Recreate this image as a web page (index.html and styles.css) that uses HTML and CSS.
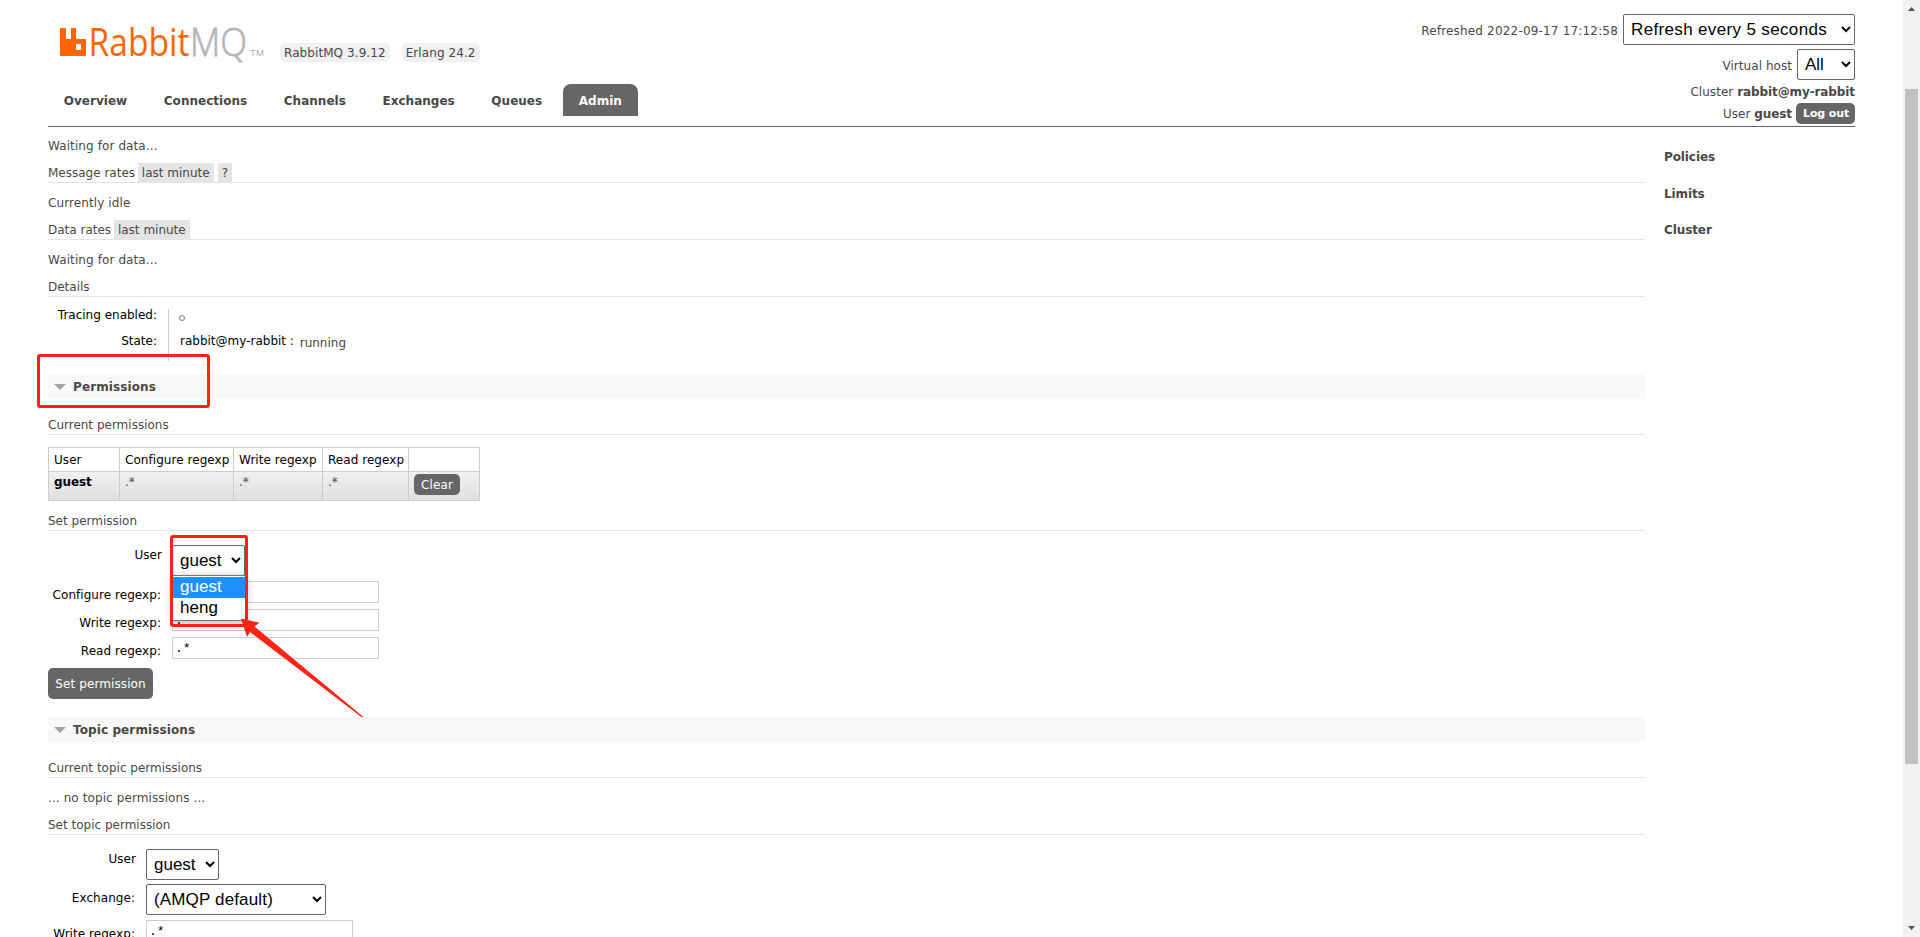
FILE: index.html
```html
<!DOCTYPE html>
<html lang="en">

<head>
    <meta charset="UTF-8">
    <title>RabbitMQ Management</title>
    <link rel="stylesheet" href="styles.css">
</head>

<body>
    <div class="page">
        <header class="header">
            <div class="header-left">
                <div class="brand">
                    <svg class="logo" width="210" height="60" viewBox="0 -16 210 60">
                        <path fill="#f60" fill-rule="evenodd" d="M1 0h4q1 0 1 1v9q0 1 1 1h3q1 0 1-1V1q0-1 1-1h3q1 0 1 1v9q0 1 1 1h8q1 0 1 1v15q0 1-1 1H1q-1 0-1-1V1q0-1 1-1zM16 17v4q0 1 1 1h3q1 0 1-1v-4q0-1-1-1h-3q-1 0-1 1z" />
                        <text class="logo-rabbit" x="28.5" y="28" textLength="101" lengthAdjust="spacingAndGlyphs">Rabbit</text>
                        <text class="logo-mq" x="130" y="28" textLength="57" lengthAdjust="spacingAndGlyphs">MQ</text>
                        <text class="logo-tm" x="190" y="28" textLength="14" lengthAdjust="spacingAndGlyphs">TM</text>
                    </svg>
                    <span class="version">RabbitMQ 3.9.12</span>
                    <span class="version">Erlang 24.2</span>
                </div>
                <nav class="menu">
                    <a>Overview</a>
                    <a>Connections</a>
                    <a>Channels</a>
                    <a>Exchanges</a>
                    <a>Queues</a>
                    <a class="selected">Admin</a>
                </nav>
            </div>
            <div class="login">
                <div class="login-row tall">
                    <span class="refreshed">Refreshed 2022-09-17 17:12:58</span>
                    <select class="refresh"><option>Refresh every 5 seconds</option></select>
                </div>
                <div class="login-row tall">
                    <span>Virtual host</span>
                    <select class="vhost"><option>All</option></select>
                </div>
                <div class="login-row cluster"><span>Cluster <b>rabbit@my-rabbit</b></span></div>
                <div class="login-row user"><span>User <b>guest</b></span><button class="btn-small logout">Log out</button></div>
            </div>
        </header>

        <div class="columns">
            <main class="main">
                <p class="msg">Waiting for data...</p>
                <h2>Message rates <span class="chip">last minute</span><span class="chip help">?</span></h2>
                <p class="msg">Currently idle</p>
                <h2>Data rates <span class="chip">last minute</span></h2>
                <p class="msg">Waiting for data...</p>
                <h2>Details</h2>
                <div class="facts">
                    <div class="facts-labels">
                        <span>Tracing enabled:</span>
                        <span>State:</span>
                    </div>
                    <div class="facts-values">
                        <span><i class="off"></i></span>
                        <span>rabbit@my-rabbit : <em>running</em></span>
                    </div>
                </div>

                <h3 class="section-title marked">Permissions</h3>
                <h2>Current permissions</h2>
                <table class="list">
                    <tr>
                        <th class="c-user">User</th>
                        <th class="c-conf">Configure regexp</th>
                        <th class="c-write">Write regexp</th>
                        <th class="c-read">Read regexp</th>
                        <th class="c-act"></th>
                    </tr>
                    <tr class="row">
                        <td><b>guest</b></td>
                        <td>.*</td>
                        <td>.*</td>
                        <td>.*</td>
                        <td><button class="btn-small">Clear</button></td>
                    </tr>
                </table>

                <h2 class="after-list">Set permission</h2>
                <div class="form">
                    <div class="field">
                        <label class="top">User</label>
                        <div class="user-select">
                            <select class="guest"><option>guest</option></select>
                            <div class="options">
                                <div class="option active">guest</div>
                                <div class="option">heng</div>
                            </div>
                            <div class="highlight"></div>
                            <svg class="arrow" width="124" height="102" viewBox="0 0 124 102">
                                <path fill="#ff2314" d="M1 1.500l18.500 4.200-5 3.800L123.500 100l-.8 1L10 15l-3 5z" />
                            </svg>
                        </div>
                    </div>
                    <div class="field"><label>Configure regexp:</label><input type="text" value=".*"></div>
                    <div class="field"><label>Write regexp:</label><input type="text" value=".*"></div>
                    <div class="field"><label>Read regexp:</label><input type="text" value=".*"></div>
                    <button class="btn">Set permission</button>
                </div>

                <h3 class="section-title">Topic permissions</h3>
                <h2>Current topic permissions</h2>
                <p class="msg">... no topic permissions ...</p>
                <h2>Set topic permission</h2>
                <div class="form topic">
                    <div class="field"><label class="top">User</label><select class="guest"><option>guest</option></select></div>
                    <div class="field"><label>Exchange:</label><select class="exchange"><option>(AMQP default)</option></select></div>
                    <div class="field"><label>Write regexp:</label><input type="text" value=".*"></div>
                </div>
            </main>
            <aside class="side">
                <a>Policies</a>
                <a>Limits</a>
                <a>Cluster</a>
            </aside>
        </div>
    </div>

    <div class="scrollbar">
        <svg width="17" height="17" viewBox="0 0 17 17"><path fill="#505050" d="M5 11h7L8.500 7z" /></svg>
        <div class="thumb"></div>
        <svg class="down" width="17" height="17" viewBox="0 0 17 17"><path fill="#505050" d="M5 6h7L8.500 10z" /></svg>
    </div>
</body>

</html>
```
FILE: styles.css
```css
*,
*::before,
*::after {
    box-sizing: border-box;
}

body {
    margin: 0;
    height: 937px;
    overflow: hidden;
    display: flex;
    background: #fff;
    color: #484848;
    font: 12px/16px Verdana, "DejaVu Sans", sans-serif;
    letter-spacing: 0.05px;
}

.page {
    width: 1903px;
    height: 937px;
    overflow: hidden;
    padding: 0 48px;
}

b,
.side a {
    font-weight: bold;
    letter-spacing: -0.1px;
}

/* header */
.header {
    display: flex;
    justify-content: space-between;
    height: 127px;
    border-bottom: 1px solid #666;
}

.brand {
    display: flex;
    height: 84px;
    padding: 12px 0 0 12px;
}

.logo {
    margin-right: 10px;
}

.logo-rabbit,
.logo-mq {
    font-family: "Open Sans", sans-serif;
    font-size: 39px;
    letter-spacing: 0;
    fill: #f60;
}

.logo-mq {
    font-weight: 300;
    fill: #b5b5b5;
    stroke: #b5b5b5;
    stroke-width: 0.8px;
}

.logo-tm {
    font-family: "Liberation Sans", sans-serif;
    font-size: 9px;
    fill: #b0b0b0;
}

.version {
    height: 19px;
    margin: 31px 12px 0 0;
    padding: 0 4px;
    line-height: 20px;
    letter-spacing: 0.08px;
    border-radius: 5px;
    background: #f0f0f0;
    white-space: nowrap;
}

.menu {
    display: flex;
    gap: 5px;
}

.menu a {
    height: 32px;
    padding: 0 15.8px;
    font-weight: bold;
    line-height: 34px;
    letter-spacing: 0.02px;
}

.menu .selected {
    background: #666;
    color: #fff;
    border-radius: 8px 8px 0 0;
}

.login {
    padding-top: 14px;
}

.login-row {
    display: flex;
    justify-content: flex-end;
    align-items: center;
    gap: 4px;
}

.login-row.tall {
    height: 31px;
    gap: 5px;
    margin-bottom: 4px;
}

.login-row.tall span {
    padding-top: 2px;
}

.login-row .refreshed {
    letter-spacing: 0.18px;
}

.login-row.cluster {
    height: 19px;
    margin-bottom: 0;
    padding-bottom: 3px;
}

.login-row.user {
    height: 21px;
}

select {
    height: 31px;
    padding: 0 3px;
    border: 1px solid #666;
    border-radius: 2px;
    background: #fff;
    color: #000;
    font: 17px "Liberation Sans", Arial, sans-serif;
}

.refresh {
    width: 232px;
    letter-spacing: 0.35px;
}

.vhost {
    width: 58px;
}

.guest {
    width: 73px;
}

.exchange {
    width: 180px;
    letter-spacing: 0.15px;
}

button {
    border: 0;
    background: #666;
    color: #fff;
    font: inherit;
    white-space: nowrap;
}

.btn-small {
    display: block;
    height: 21px;
    padding: 0 7px;
    border-radius: 5px;
    letter-spacing: 0.15px;
}

.logout {
    width: 59px;
    font-size: 11px;
    font-weight: bold;
    letter-spacing: -0.1px;
}

.btn {
    display: block;
    width: 105px;
    height: 31px;
    margin-top: 3px;
    padding: 0;
    border-radius: 5px;
    letter-spacing: 0.1px;
}

/* content */
.columns {
    display: flex;
}

.main {
    width: 1597px;
    margin-top: -1px;
}

.side {
    display: flex;
    flex-direction: column;
    gap: 20.5px;
    padding: 22px 0 0 19px;
}

.msg {
    height: 37px;
    margin: 0;
    padding-top: 12px;
    letter-spacing: 0.1px;
}

h2 {
    height: 20px;
    margin: 0;
    border-bottom: 1px solid #e4e4e4;
    font-size: 12px;
    font-weight: normal;
    line-height: 21px;
    letter-spacing: 0;
}

.chip {
    display: inline-block;
    height: 19px;
    margin-left: -1px;
    padding: 0 4px;
    background: #e4e4e4;
    vertical-align: top;
}

.help {
    margin-left: 4px;
}

.facts {
    display: flex;
    height: 52px;
    margin: 12px 0 13px;
    color: #000;
    line-height: 12px;
    letter-spacing: 0;
}

.facts-labels,
.facts-values {
    display: grid;
    grid-template-rows: 26px 26px;
}

.facts-labels {
    width: 121px;
    padding-right: 11px;
    border-right: 1px solid #ccc;
    text-align: right;
}

.facts-values {
    padding-left: 11px;
}

.facts em {
    position: relative;
    top: 2px;
    margin-left: 2px;
    font-style: normal;
    color: #484848;
}

.off {
    display: block;
    width: 6px;
    height: 6px;
    margin: 6px 0 0 -1px;
    border: 1px solid #777;
    border-radius: 50%;
}

.section-title {
    position: relative;
    display: flex;
    align-items: center;
    height: 25px;
    margin: 0 0 16px;
    padding-left: 6px;
    background: #f8f8f8;
    font-size: 12px;
    letter-spacing: 0.1px;
}

.section-title::before {
    content: "";
    margin-right: 7px;
    border: 6px solid transparent;
    border-top: 6px solid #a4a4a4;
    border-bottom: 0;
}

.marked::after {
    content: "";
    position: absolute;
    left: -11px;
    top: -20px;
    width: 173px;
    height: 54px;
    border: 3px solid #ff2314;
    border-radius: 3px;
}

.list {
    width: 432px;
    margin-top: 12px;
    border-collapse: collapse;
    table-layout: fixed;
    color: #000;
}

.list th,
.list td {
    padding: 0 5px;
    border: 1px solid #ccc;
    text-align: left;
    vertical-align: top;
    font-weight: normal;
    white-space: nowrap;
}

.list th {
    height: 24px;
    padding: 1px 0 0 5px;
    line-height: 22px;
}

.list td {
    height: 29px;
    padding-top: 2px;
}

.list td:not(:first-child) {
    color: #484848;
}

.row {
    background: linear-gradient(#f0f0f0, #dfdfdf);
}

.c-user { width: 71px; }
.c-conf { width: 114px; }
.c-write { width: 89px; }
.c-read { width: 86px; }

.after-list {
    margin-top: 10px;
}

/* forms */
.form {
    padding-top: 14px;
    color: #000;
    margin-bottom: 18px;
}

.field {
    display: flex;
    height: 28px;
}

.field:first-child {
    height: 36px;
}

.field label {
    width: 124px;
    padding-right: 11px;
    line-height: 28px;
    text-align: right;
}

.field .top {
    padding-right: 10px;
    line-height: 20px;
}

.topic .field:first-child {
    height: 35px;
}

.topic .field {
    height: 36px;
}

.topic label {
    width: 98px;
}

input {
    width: 207px;
    height: 22px;
    padding: 0 2px;
    border: 1px solid #ccc;
    color: #000;
    font: 13px/18px "Liberation Mono", monospace;
}

.user-select {
    position: relative;
}

/* open dropdown */
.options {
    position: absolute;
    left: 0;
    top: 30px;
    width: 74px;
    height: 46px;
    padding-top: 1px;
    border: 1px solid #777;
    background: #fff;
    box-shadow: 0 2px 8px rgba(0, 0, 0, 0.3);
    font: 17px/20px "Liberation Sans", Arial, sans-serif;
}

.option {
    height: 21px;
    padding-left: 7px;
}

.option.active {
    background: #1e90ff;
    color: #fff;
}

.highlight {
    position: absolute;
    left: -2px;
    top: -10px;
    width: 78px;
    height: 92px;
    border: 3px solid #ff2314;
    border-radius: 3px;
}

.arrow {
    position: absolute;
    left: 68px;
    top: 72px;
}

/* window scrollbar */
.scrollbar {
    display: flex;
    flex-direction: column;
    width: 17px;
    height: 937px;
    background: #f1f1f1;
}

.thumb {
    width: 13px;
    height: 675px;
    margin: 72px 2px 0;
    background: #c1c1c1;
}

.down {
    margin-top: auto;
}
```
